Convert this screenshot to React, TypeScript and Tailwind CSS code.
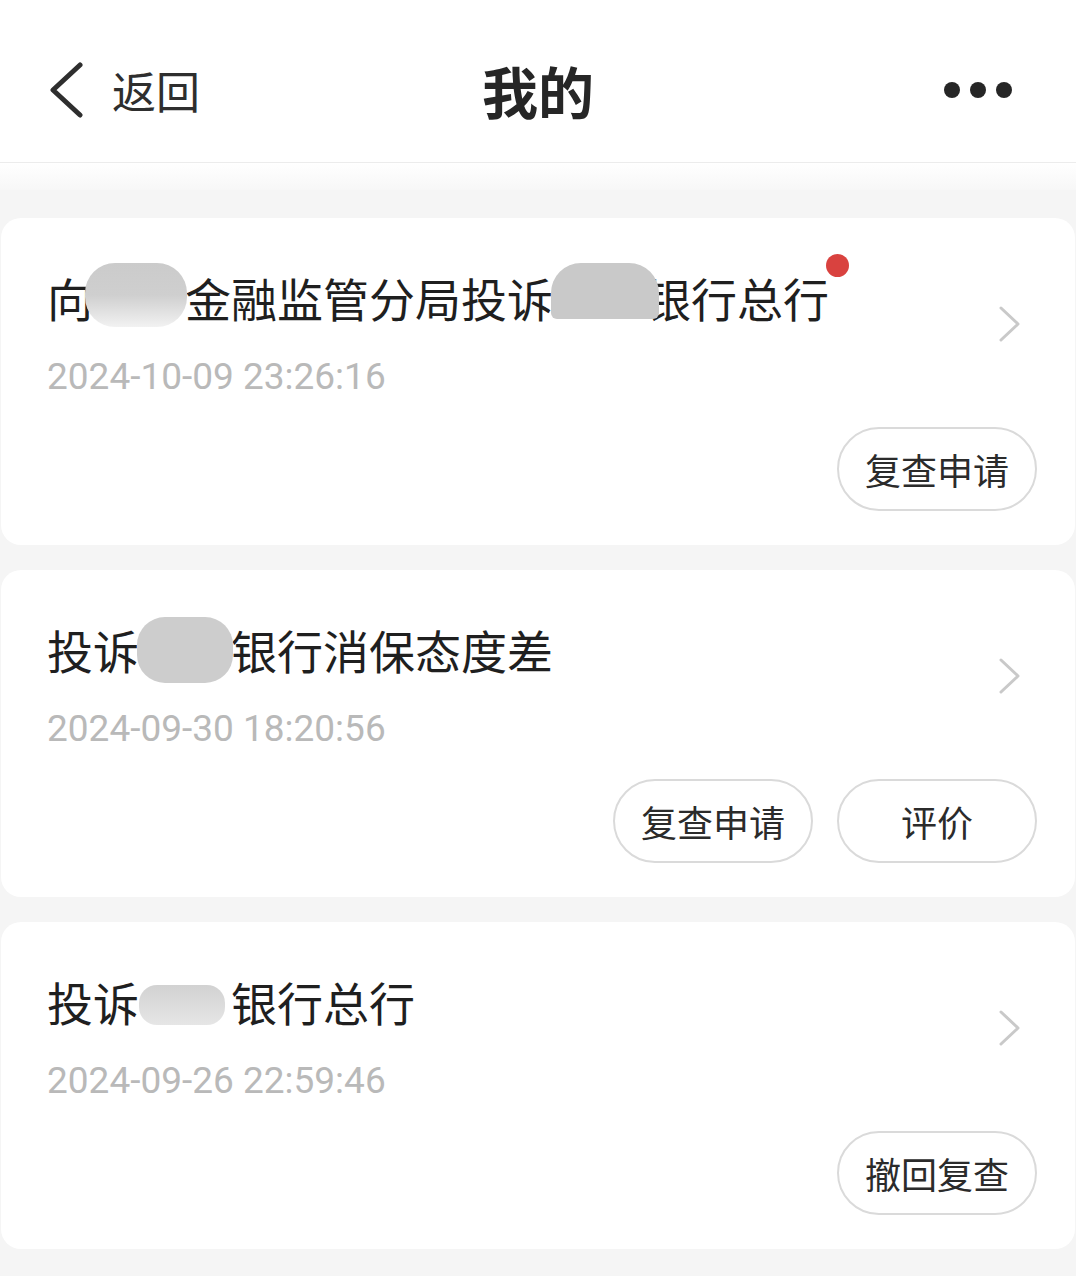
import React from "react";

const cjk = { fontFamily: '"Noto Sans CJK SC", "Noto Sans", sans-serif' };
const num = { fontFamily: 'Roboto, "Noto Sans", sans-serif' };

function Redact({ blob }: { blob: string }) {
  return (
    <span className="relative inline-block h-[56px] w-[92px] align-top">
      <span className={blob} />
    </span>
  );
}

function Pill({ label }: { label: string }) {
  return (
    <button className="flex h-[84px] w-[200px] items-center justify-center rounded-full border-[2.5px] border-[#dadada] bg-white text-[36px] text-[#2b2b2b]">
      {label}
    </button>
  );
}

function Chevron() {
  return (
    <svg width="26" height="40" viewBox="0 0 26 40" className="mb-[20px] shrink-0">
      <path d="M4 4 L21 20 L4 36" fill="none" stroke="#c9c9c9" strokeWidth="3" strokeLinecap="round" strokeLinejoin="round" />
    </svg>
  );
}

type Item = {
  title: React.ReactNode;
  date: string;
  actions: string[];
  dot?: boolean;
};

const items: Item[] = [
  {
    title: (
      <>
        向
        <Redact blob="absolute -left-[8px] -top-[6px] h-[64px] w-[102px] rounded-[30px] bg-gradient-to-b from-[#cbcbcb] via-[#cfcfcf] to-[#f2f2f2]" />
        金融监管分局投诉
        <Redact blob="absolute -left-[2px] -top-[6px] h-[56px] w-[108px] rounded-t-[30px] rounded-b-[6px] bg-[#c9c9c9]" />
        银行总行
      </>
    ),
    date: "2024-10-09 23:26:16",
    actions: ["复查申请"],
    dot: true,
  },
  {
    title: (
      <>
        投诉
        <Redact blob="absolute -left-[2px] -top-[4px] h-[66px] w-[96px] rounded-[28px] bg-[#cdcdcd]" />
        银行消保态度差
      </>
    ),
    date: "2024-09-30 18:20:56",
    actions: ["复查申请", "评价"],
  },
  {
    title: (
      <>
        投诉
        <Redact blob="absolute left-[0px] top-[12px] h-[40px] w-[86px] rounded-[18px] bg-gradient-to-b from-[#d2d2d2] to-[#e6e6e6]" />
        银行总行
      </>
    ),
    date: "2024-09-26 22:59:46",
    actions: ["撤回复查"],
  },
];

function Card({ item }: { item: Item }) {
  return (
    <div className="mx-[1px] rounded-[20px] bg-white pb-[34px] pl-[46px] pr-[38px] pt-[51px]">
      <div className="flex items-center pr-[14px]">
        <div className="flex-1">
          <div className="relative inline-block whitespace-nowrap text-[46px] leading-[56px] text-[#1f1f1f]">
            {item.title}
            {item.dot && (
              <span className="absolute -right-[20px] -top-[15px] h-[23px] w-[23px] rounded-full bg-[#d9423f]" />
            )}
          </div>
          <div className="mt-[30px] text-[37px] leading-[44px] text-[#b9b9b9]" style={num}>
            {item.date}
          </div>
        </div>
        <Chevron />
      </div>
      <div className="mt-[28px] flex justify-end gap-[24px]">
        {item.actions.map((a) => (
          <Pill key={a} label={a} />
        ))}
      </div>
    </div>
  );
}

export default function App() {
  return (
    <div className="min-h-[1276px] w-[1076px] bg-[#f5f5f5]" style={cjk}>
      <header className="grid h-[163px] grid-cols-3 items-center border-b-[1.5px] border-[#ececec] bg-white pt-[18px]">
        <div className="flex items-center gap-[28px] pl-[48px]">
          <svg width="36" height="56" viewBox="0 0 36 56">
            <path d="M32 3 L5 28 L32 53" fill="none" stroke="#2e2e2e" strokeWidth="5" strokeLinecap="round" strokeLinejoin="round" />
          </svg>
          <span className="text-[44px] text-[#2e2e2e]">返回</span>
        </div>
        <div className="text-center text-[56px] font-bold text-[#262626]">我的</div>
        <div className="flex justify-end gap-[10px] pr-[64px]">
          <span className="h-4 w-4 rounded-full bg-[#262626]" />
          <span className="h-4 w-4 rounded-full bg-[#262626]" />
          <span className="h-4 w-4 rounded-full bg-[#262626]" />
        </div>
      </header>
      <div className="h-[27px] bg-gradient-to-b from-white to-[#f7f7f7]" />
      <main className="flex flex-col gap-[25px] pt-[28px] pb-[26px]">
        {items.map((it, i) => (
          <Card key={i} item={it} />
        ))}
      </main>
    </div>
  );
}
